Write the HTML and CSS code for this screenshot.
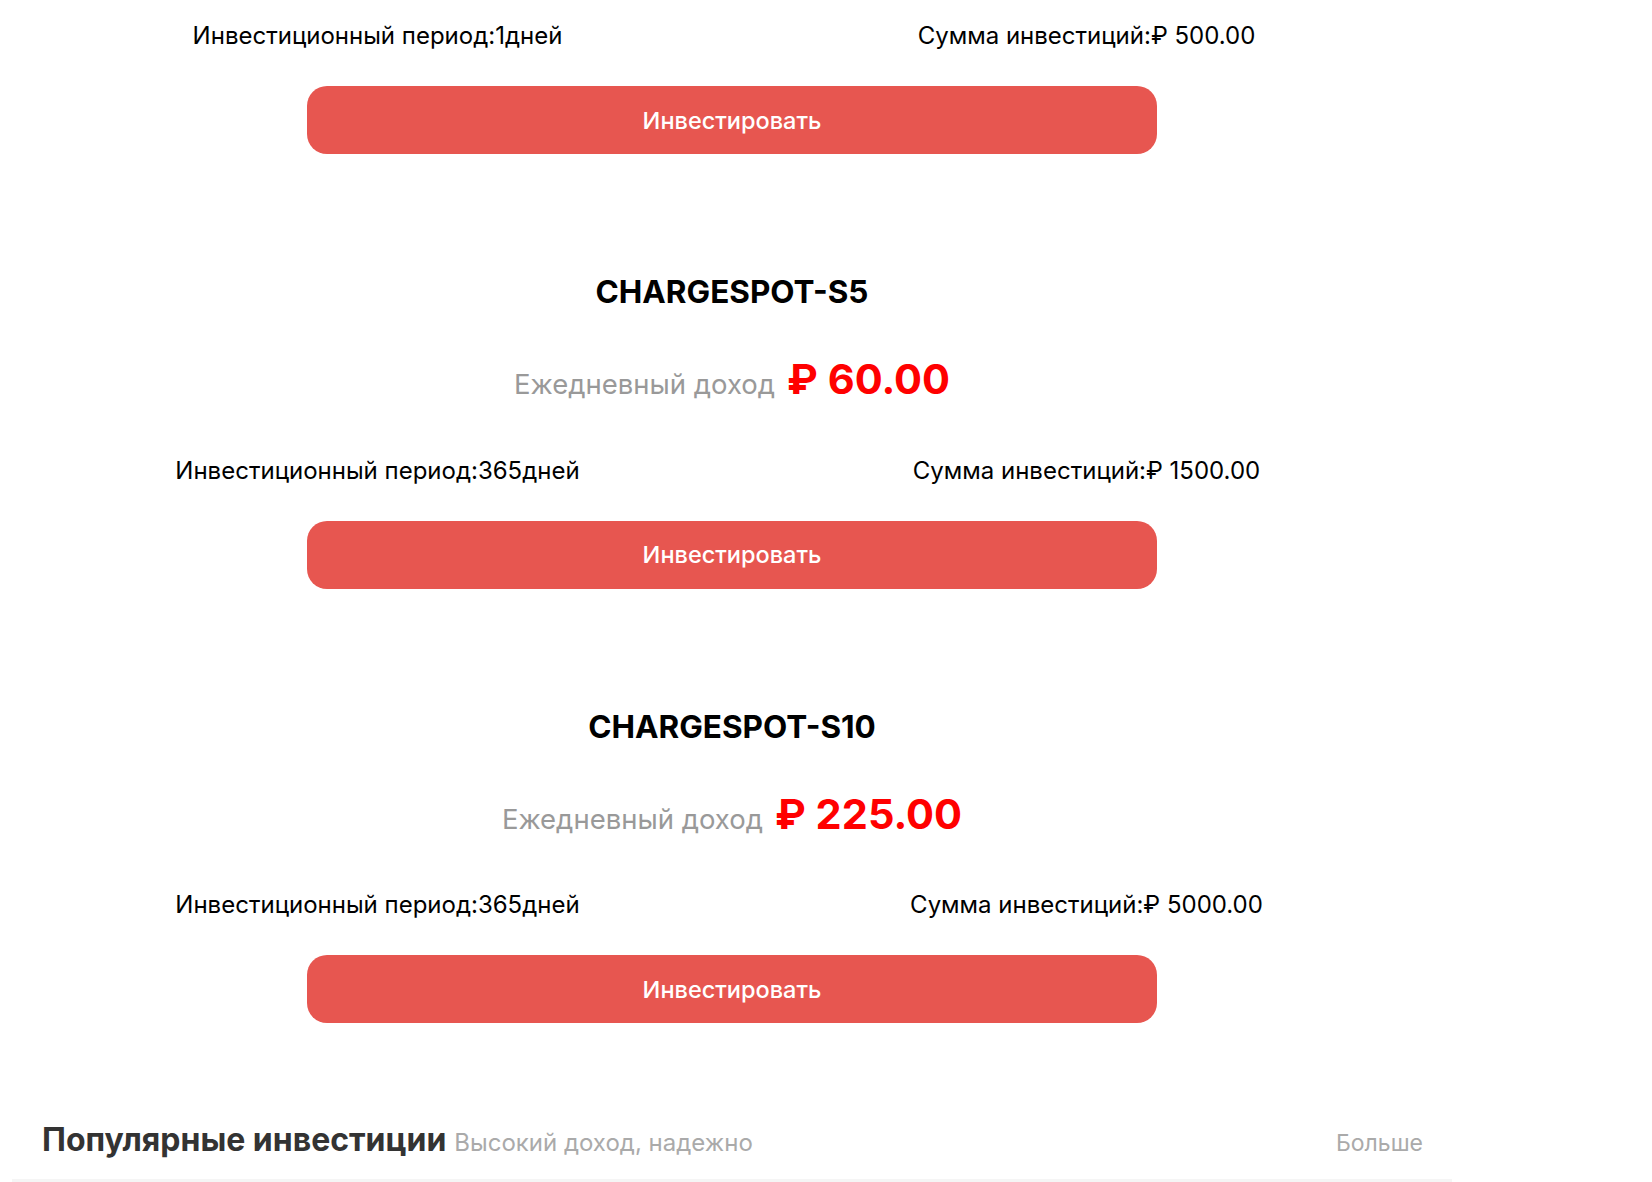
FILE: index.html
```html
<!DOCTYPE html>
<html lang="ru">
<head>
<meta charset="utf-8">
<title>Инвестиции</title>
<link rel="stylesheet" href="styles.css">
</head>
<body>
<div class="page">
  <section class="card card-partial">
    <div class="terms">
      <span class="term">Инвестиционный период:1дней</span>
      <span class="term">Сумма инвестиций:₽ 500.00</span>
    </div>
    <button class="invest-btn">Инвестировать</button>
  </section>

  <section class="card">
    <h3 class="card-title">CHARGESPOT-S5</h3>
    <div class="income">
      <span class="income-label">Ежедневный доход</span>
      <span class="income-value">₽ 60.00</span>
    </div>
    <div class="terms">
      <span class="term">Инвестиционный период:365дней</span>
      <span class="term">Сумма инвестиций:₽ 1500.00</span>
    </div>
    <button class="invest-btn">Инвестировать</button>
  </section>

  <section class="card">
    <h3 class="card-title">CHARGESPOT-S10</h3>
    <div class="income">
      <span class="income-label">Ежедневный доход</span>
      <span class="income-value">₽ 225.00</span>
    </div>
    <div class="terms">
      <span class="term">Инвестиционный период:365дней</span>
      <span class="term">Сумма инвестиций:₽ 5000.00</span>
    </div>
    <button class="invest-btn">Инвестировать</button>
  </section>

  <div class="section-head">
    <div class="section-titles">
      <span class="section-title">Популярные инвестиции</span>
      <span class="section-sub">Высокий доход, надежно</span>
    </div>
    <a class="section-more" href="#">Больше</a>
  </div>
  <div class="divider"></div>
</div>
</body>
</html>
```

FILE: styles.css
```css
* {
  box-sizing: border-box;
}

html, body {
  margin: 0;
  padding: 0;
  background: #ffffff;
}

body {
  font-family: Inter, "Noto Sans", "Liberation Sans", sans-serif;
  color: #000;
  overflow: hidden;
}

.page {
  width: 1440px;
  margin-left: 12px;
}

.card {
  padding: 0 11px;
  margin-bottom: 118px;
}

.card-partial {
  padding-top: 20px;
}

.card-title {
  margin: 0;
  font-size: 31.5px;
  line-height: 40px;
  font-weight: 700;
  text-align: center;
  color: #000;
}

.income {
  margin-top: 47px;
  display: flex;
  justify-content: center;
  align-items: baseline;
  gap: 12px;
}

.income-label {
  font-size: 27.5px;
  line-height: 1;
  color: #999999;
}

.income-value {
  font-size: 41.5px;
  line-height: 1;
  font-weight: 700;
  color: #ff0000;
}

.terms {
  margin-top: 54px;
  display: grid;
  grid-template-columns: 1fr 1fr;
}

.card-partial .terms {
  margin-top: 0;
}

.term {
  text-align: center;
  font-size: 24px;
  line-height: 32px;
  color: #000;
}

.invest-btn {
  display: block;
  width: 60%;
  height: 68px;
  margin: 34px auto 0;
  border: none;
  border-radius: 20px;
  background: #e75650;
  color: #ffffff;
  font-family: inherit;
  font-size: 23.5px;
  font-weight: 500;
  cursor: pointer;
}

.section-head {
  margin-top: -17px;
  padding: 0 29px 0 30px;
  display: flex;
  justify-content: space-between;
  align-items: baseline;
}

.section-titles {
  display: flex;
  align-items: baseline;
  gap: 8px;
}

.section-title {
  font-size: 32px;
  line-height: 1;
  font-weight: 700;
  color: #333333;
}

.section-sub {
  font-size: 24px;
  line-height: 1;
  color: #aaaaaa;
}

.section-more {
  font-size: 23px;
  line-height: 1;
  color: #aaaaaa;
  text-decoration: none;
}

.divider {
  margin-top: 23px;
  height: 10px;
  background: #f5f5f5;
}
```
